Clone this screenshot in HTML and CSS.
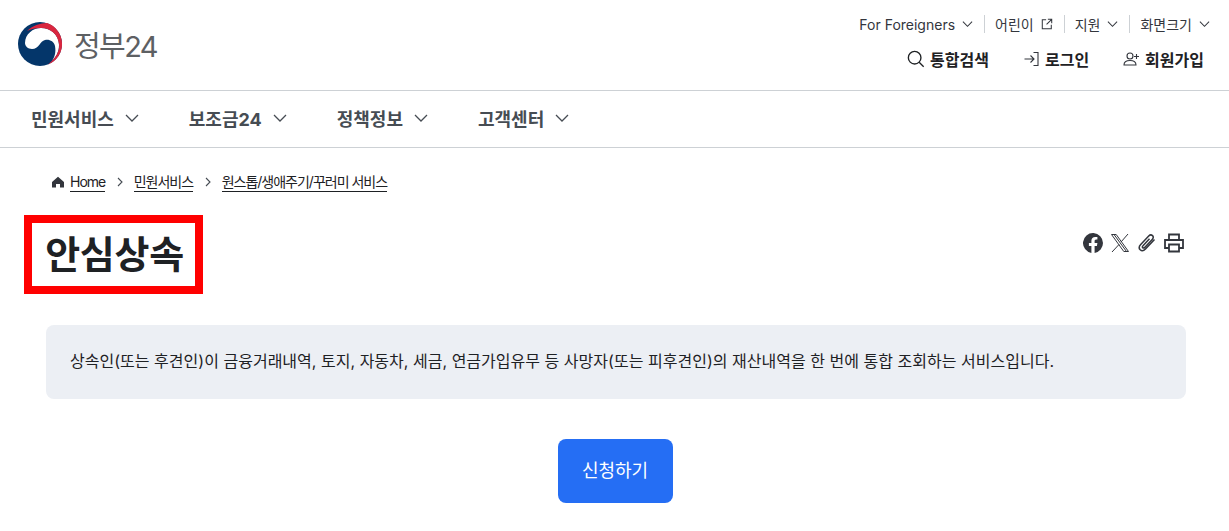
FILE: index.html
```html
<!DOCTYPE html>
<html lang="ko">
<head>
    <meta charset="UTF-8">
    <title>안심상속 | 정부24</title>
    <link rel="stylesheet" href="styles.css">
</head>
<body>

    <header class="top">
        <a class="logo" href="#">
            <svg class="emblem" width="46" height="44" viewBox="0 0 46 44">
                <circle cx="23" cy="22" r="22" fill="#04366a"/>
                <path d="M8 21C8 12 16 6 24 6c10 0 18 7 18 17 0 7-3 12-7 16 3-5 4-9 3-15-1-5-6-7-10-6-5 1-6 9-13 9-4 0-7-3-7-6z" fill="#fff"/>
                <path d="M10 9c5-5 14-8 20-7.900A22 22 0 0 1 31 42.500C39 36 43 29 42 22 41 12 33 6 24 6c-6 0-10 1-14 3z" fill="#d9263f"/>
            </svg>
            <span class="logo-text">정부24</span>
        </a>
        <div class="top-right">
            <nav class="util">
                <a href="#">For Foreigners <svg class="chev-s" viewBox="0 0 12 8"><path d="M1 1.5l5 5 5-5"/></svg></a>
                <a href="#">어린이 <svg class="ext" viewBox="0 0 14 14"><path d="M6 2H1.5v10.500H12V8M8 1.500h4.500V6M12.500 1.500L6.500 7.500"/></svg></a>
                <a href="#">지원 <svg class="chev-s" viewBox="0 0 12 8"><path d="M1 1.5l5 5 5-5"/></svg></a>
                <a href="#">화면크기 <svg class="chev-s" viewBox="0 0 12 8"><path d="M1 1.5l5 5 5-5"/></svg></a>
            </nav>
            <nav class="member">
                <a href="#"><svg class="m-search" viewBox="0 0 20 20"><circle cx="8.5" cy="8.5" r="7"/><path d="M13.5 13.5l5 5"/></svg>통합검색</a>
                <a href="#"><svg class="m-icon" viewBox="0 0 16 16"><path d="M1 8h9M7 4.5L10.500 8 7 11.500M10 1.500h4.500v13H10"/></svg>로그인</a>
                <a href="#"><svg class="m-icon" viewBox="0 0 17 16"><circle cx="7" cy="5" r="3"/><path d="M1 14c0-3 2.500-4.500 6-4.500s6 1.500 6 4.500zM13.500 3v5M11 5.500h5"/></svg>회원가입</a>
            </nav>
        </div>
    </header>

    <nav class="gnb">
        <a href="#">민원서비스 <svg class="chev" viewBox="0 0 14 8"><path d="M1 1l6 6 6-6"/></svg></a>
        <a href="#">보조금24 <svg class="chev" viewBox="0 0 14 8"><path d="M1 1l6 6 6-6"/></svg></a>
        <a href="#">정책정보 <svg class="chev" viewBox="0 0 14 8"><path d="M1 1l6 6 6-6"/></svg></a>
        <a href="#">고객센터 <svg class="chev" viewBox="0 0 14 8"><path d="M1 1l6 6 6-6"/></svg></a>
    </nav>

    <main class="content">
        <div class="crumbs">
            <svg class="home" viewBox="0 0 12 12"><path d="M6 .8L12 6v5.500H8V8H4v3.500H0V6z"/></svg>
            <a href="#">Home</a>
            <svg class="crumb-sep" viewBox="0 0 6 10"><path d="M1 1l4 4-4 4"/></svg>
            <a href="#">민원서비스</a>
            <svg class="crumb-sep" viewBox="0 0 6 10"><path d="M1 1l4 4-4 4"/></svg>
            <a href="#">원스톱/생애주기/꾸러미 서비스</a>
        </div>

        <div class="title-row">
            <h1>안심상속</h1>
            <div class="share">
                <svg width="20" height="20" viewBox="0 0 20 20"><path class="fill" d="M20 10a10 10 0 1 0-11.600 9.900v-7H5.900V10h2.500V7.800c0-2.500 1.500-3.900 3.800-3.900 1.100 0 2.200.2 2.200.2v2.500h-1.200c-1.200 0-1.600.8-1.600 1.600V10h2.800l-.5 2.900h-2.300v7A10 10 0 0 0 20 10z"/></svg>
                <svg width="20" height="20" viewBox="0 0 20 20"><path class="line" d="M1.5 1.500h4.700l12.300 17h-4.700zM18 1l-7 8M9 11.500L2 19M4 1.500l12.500 17"/></svg>
                <svg width="20" height="20" viewBox="0 0 20 20"><path class="line clip" d="M17.500 6.500L8.500 16c-1.800 1.900-4 2-5.300.8-1.300-1.300-1.200-3.400.5-5.200l8-8.500c1.200-1.300 2.800-1.400 3.800-.5 1 1 .9 2.500-.3 3.800l-7.500 8c-.7.700-1.500.8-2 .3s-.4-1.300.3-2l6.500-7"/></svg>
                <svg width="20" height="20" viewBox="0 0 20 20"><path class="line wide" d="M5 7V1.500h10V7M5 15H1V7h18v8h-4M5 11.500h10v7H5z"/></svg>
            </div>
        </div>

        <p class="notice">상속인(또는 후견인)이 금융거래내역, 토지, 자동차, 세금, 연금가입유무 등 사망자(또는 피후견인)의 재산내역을 한 번에 통합 조회하는 서비스입니다.</p>

        <div class="actions">
            <button>신청하기</button>
        </div>
    </main>

</body>
</html>
```

FILE: styles.css
```css
* {
    box-sizing: border-box;
}

body {
    margin: 0;
    background: #fff;
    color: #1e2124;
    font-family: Inter, "Noto Sans CJK KR", sans-serif;
    overflow: hidden;
}

a {
    color: inherit;
    text-decoration: none;
}

svg {
    flex: none;
}

.top {
    height: 91px;
    border-bottom: 1px solid #cdd1d5;
    display: flex;
    justify-content: space-between;
    padding: 0 25px 0 17px;
}

.logo {
    display: flex;
    align-items: center;
    gap: 11px;
    height: 88px;
}

.logo-text {
    font-size: 29px;
    letter-spacing: -1.6px;
    color: #5d6063;
}

.top-right {
    display: flex;
    flex-direction: column;
    align-items: flex-end;
}

.util {
    display: flex;
    margin: 15px -6px 0 0;
    height: 18px;
    font-size: 14px;
    color: #33363d;
    align-items: center;
}

.util a {
    display: flex;
    align-items: center;
    gap: 7px;
    padding-left: 10px;
    margin-left: 11px;
    border-left: 1px solid #cdd1d5;
    height: 18px;
}

.util a:first-child {
    border-left: none;
    padding-left: 0;
    margin-left: 0;
}

.chev-s {
    width: 11px;
    height: 8px;
    fill: none;
    stroke: #33363d;
    stroke-width: 1.1;
}

.ext {
    width: 12px;
    height: 12px;
    fill: none;
    stroke: #33363d;
    stroke-width: 1.2;
}

.member {
    display: flex;
    gap: 34px;
    margin-top: 15px;
    font-size: 16px;
    font-weight: 700;
}

.member a {
    display: flex;
    align-items: center;
    gap: 5px;
    height: 22px;
}

.m-search {
    width: 18px;
    height: 18px;
    fill: none;
    stroke: #1e2124;
    stroke-width: 1.5;
}

.m-icon {
    width: 17px;
    height: 16px;
    fill: none;
    stroke: #33363d;
    stroke-width: 1.1;
}

.gnb {
    height: 57px;
    border-bottom: 1px solid #cdd1d5;
    display: flex;
    align-items: center;
    padding: 0 0 3px 31px;
    gap: 50px;
    font-size: 18px;
    font-weight: 700;
    color: #464c53;
}

.gnb a {
    display: flex;
    align-items: center;
    gap: 11px;
}

.chev {
    width: 14px;
    height: 8px;
    fill: none;
    stroke: #464c53;
    stroke-width: 1.3;
}

.content {
    padding: 0 43px 0 24px;
}

.crumbs {
    display: flex;
    align-items: center;
    height: 20px;
    margin: 24px 0 0 28px;
    font-size: 14px;
    letter-spacing: -1px;
    color: #1e2124;
}

.crumbs a {
    border-bottom: 1px solid #1e2124;
    line-height: 19px;
}

.home {
    width: 12px;
    height: 12px;
    fill: #33363d;
    margin-right: 6px;
}

.crumb-sep {
    width: 6px;
    height: 10px;
    fill: none;
    stroke: #464c53;
    stroke-width: 1.1;
    margin: 0 11px 0 11.5px;
}

.title-row {
    display: flex;
    justify-content: space-between;
    align-items: flex-start;
    margin-top: 23px;
}

h1 {
    margin: 0;
    width: 179px;
    height: 79px;
    border: 8px solid #f00;
    padding-left: 2px;
    font-size: 38px;
    font-weight: 700;
    letter-spacing: -0.3px;
    line-height: 62px;
    text-align: center;
    color: #1e2124;
}

.share {
    display: flex;
    gap: 7px;
    margin: 18px 2px 0 0;
}

.fill {
    fill: #33363d;
}

.line {
    fill: none;
    stroke: #33363d;
    stroke-width: 1;
}

.line.wide {
    stroke-width: 1.8;
}

.line.clip {
    stroke-width: 1.5;
}

.notice {
    margin: 31px 0 0 22px;
    height: 74px;
    background: #eceff4;
    border-radius: 8px;
    padding: 0 24px;
    font-size: 16px;
    line-height: 72px;
    letter-spacing: 0.02px;
    color: #1e2124;
    white-space: nowrap;
}

.actions {
    display: flex;
    justify-content: center;
    margin-top: 40px;
    padding-left: 20px;
}

.actions button {
    width: 115px;
    height: 64px;
    padding-bottom: 6px;
    background: #256ef4;
    color: #fff;
    border: none;
    border-radius: 8px;
    font-family: inherit;
    font-size: 18px;
    font-weight: 400;
}
```
